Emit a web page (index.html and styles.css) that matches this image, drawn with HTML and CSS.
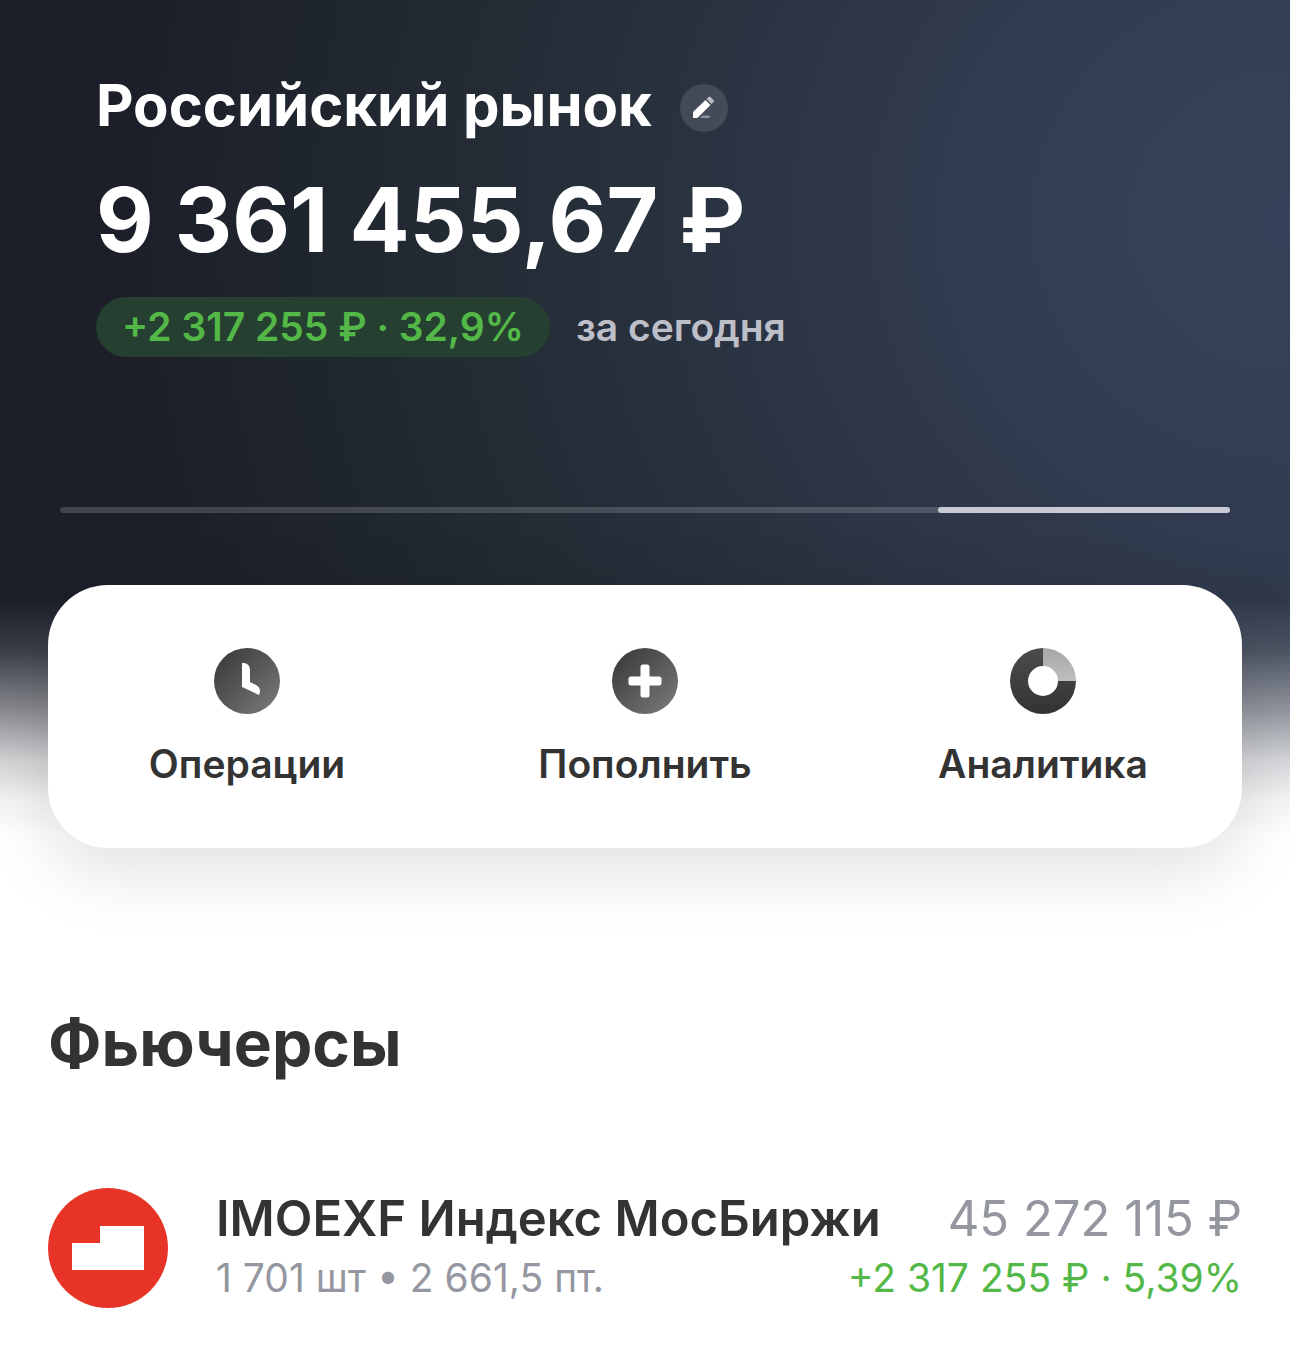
FILE: index.html
```html
<!DOCTYPE html>
<html lang="ru">
  <head>
    <meta charset="UTF-8" />
    <meta name="viewport" content="width=device-width, initial-scale=1.0" />
    <title>Российский рынок</title>
    <link rel="stylesheet" href="styles.css">
  </head>
  <body>
    <header class="hero">
      <div class="account">
        <div class="account-title">
          <h1>Российский рынок</h1>
          <button class="edit-btn" aria-label="Изменить название">
            <svg viewBox="0 0 48 48" aria-hidden="true">
              <path d="M13 34v-5q0-1 1-2L25.500 16l5 5L18.500 33q-1 1-2 1z" fill="#fff" />
              <path d="M26.500 15l2-2q1-1 2 0l3 3q1 1 0 2l-2 2z" fill="#bbbcc6" />
              <path d="M20 34l2.500-2.500h6q1.500 0 1.500 1.200t-1.500 1.300z" fill="#8e9097" />
            </svg>
          </button>
        </div>
        <p class="balance">9 361 455,67 ₽</p>
        <div class="change">
          <span class="change-badge">+2 317 255 ₽ · 32,9%</span>
          <span class="change-period">за сегодня</span>
        </div>
      </div>

      <div class="pager"><span class="pager-active"></span></div>

      <nav class="actions">
        <button class="action">
          <svg viewBox="0 0 66 66" aria-hidden="true">
            <defs>
              <linearGradient id="iconShade" x1="0.1" y1="0.1" x2="0.9" y2="0.9">
                <stop offset="0" stop-color="#3c3c3c" />
                <stop offset="1" stop-color="#757575" />
              </linearGradient>
            </defs>
            <circle cx="33" cy="33" r="33" fill="url(#iconShade)" />
            <path d="M28 15h2q6 1 6 7v12l6 3q4 2 4 6 0 2-1 4L28 39z" fill="#fff" />
          </svg>
          Операции
        </button>
        <button class="action">
          <svg viewBox="0 0 66 66" aria-hidden="true">
            <circle cx="33" cy="33" r="33" fill="url(#iconShade)" />
            <path d="M28.500 19q0-2.500 2.500-2.500h4q2.500 0 2.500 2.500v9.500H47q2.500 0 2.500 2.500v4q0 2.500-2.500 2.500h-9.500V47q0 2.500-2.500 2.500h-4q-2.500 0-2.500-2.500v-9.500H19q-2.500 0-2.500-2.500v-4q0-2.500 2.500-2.500h9.500z" fill="#fff" />
          </svg>
          Пополнить
        </button>
        <button class="action">
          <svg viewBox="0 0 66 66" aria-hidden="true">
            <defs>
              <linearGradient id="ringShade" x1="0" y1="0" x2="0" y2="1">
                <stop offset="0" stop-color="#4c4c4c" />
                <stop offset="1" stop-color="#333" />
              </linearGradient>
              <linearGradient id="sliceShade" x1="0" y1="0" x2="0" y2="1">
                <stop offset="0" stop-color="#a6a6a6" />
                <stop offset="1" stop-color="#bfbfbf" />
              </linearGradient>
            </defs>
            <path d="M33 0A33 33 0 1 0 66 33H48A15 15 0 1 1 33 18z" fill="url(#ringShade)" />
            <path d="M33 0A33 33 0 0 1 66 33H48A15 15 0 0 0 33 18z" fill="url(#sliceShade)" />
          </svg>
          Аналитика
        </button>
      </nav>
    </header>

    <main class="holdings">
      <h2>Фьючерсы</h2>
      <a class="holding" href="#imoexf">
        <svg class="holding-logo" viewBox="0 0 120 120" aria-hidden="true">
          <circle cx="60" cy="60" r="60" fill="#e83427" />
          <path d="M24 55h28V38h44v44H24z" fill="#fff" />
        </svg>
        <span class="holding-info">
          <span class="holding-row">
            <span class="holding-name">IMOEXF Индекс МосБиржи</span>
            <span class="holding-sum">45 272 115 ₽</span>
          </span>
          <span class="holding-row small">
            <span class="holding-note">1 701 шт • 2 661,5 пт.</span>
            <span class="holding-gain">+2 317 255 ₽ · 5,39%</span>
          </span>
        </span>
      </a>
    </main>
  </body>
</html>
```
FILE: styles.css
```css
* {
  margin: 0;
  padding: 0;
  box-sizing: border-box;
}

body {
  background: #fff;
  color: #333;
  font-family: Inter, "Liberation Sans", sans-serif;
}

button {
  border: none;
  background: none;
  color: inherit;
  font-family: inherit;
  cursor: pointer;
}

svg {
  display: block;
}

.hero {
  padding: 72px 48px 0;
  background:
    linear-gradient(to bottom, rgba(255, 255, 255, 0) 600px, rgba(255, 255, 255, 0.14) 650px, rgba(255, 255, 255, 0.48) 710px, rgba(255, 255, 255, 0.8) 760px, rgba(255, 255, 255, 0.95) 800px, #fff 836px),
    radial-gradient(1240px 1160px at 100% 220px, #37425a 0%, #343e54 18%, #2f384a 36%, #28303c 54%, #20272f 76%, #1c1f2a 94%);
}

.account {
  padding: 0 48px;
  color: #fff;
}

.account-title {
  display: flex;
  align-items: center;
  gap: 28px;
}

h1 {
  padding-bottom: 6px;
  font-size: 58px;
  line-height: 66px;
  font-weight: 700;
}

.edit-btn {
  width: 48px;
  height: 48px;
  border-radius: 50%;
  background: rgba(255, 255, 255, 0.12);
}

.balance {
  margin-top: 24px;
  font-size: 89px;
  line-height: 104px;
  font-weight: 700;
}

.change {
  display: flex;
  align-items: center;
  gap: 26px;
  margin-top: 25px;
  font-size: 39px;
  line-height: 60px;
  font-weight: 600;
}

.change-badge {
  padding: 0 26px;
  border-radius: 30px;
  background: #253f31;
  color: #54b848;
}

.change-period {
  color: #bcbfc8;
}

.pager {
  height: 6px;
  margin: 150px 12px 72px;
  border-radius: 3px;
  background: rgba(255, 255, 255, 0.16);
}

.pager-active {
  display: block;
  width: 25%;
  height: 6px;
  margin-left: auto;
  border-radius: 3px;
  background: #c8cbd5;
}

.actions {
  display: flex;
  border-radius: 60px;
  background: #fff;
  box-shadow: 0 20px 72px rgba(0, 0, 0, 0.13);
}

.action {
  display: flex;
  flex: 1;
  flex-direction: column;
  align-items: center;
  gap: 26px;
  padding: 63px 0 60px;
  font-size: 39px;
  line-height: 48px;
  font-weight: 600;
}

.action svg {
  width: 66px;
  height: 66px;
}

.holdings {
  padding: 155px 48px 40px;
}

h2 {
  font-size: 64px;
  line-height: 80px;
  font-weight: 700;
}

.holding {
  display: flex;
  align-items: center;
  gap: 48px;
  margin-top: 105px;
  color: #333;
  text-decoration: none;
}

.holding-logo {
  flex: none;
  width: 120px;
  height: 120px;
}

.holding-info {
  flex: 1;
}

.holding-row {
  display: flex;
  justify-content: space-between;
  font-size: 49px;
  line-height: 60px;
  white-space: nowrap;
}

.holding-row.small {
  font-size: 39px;
  line-height: 58px;
}

.holding-name {
  font-weight: 600;
}

.holding-sum,
.holding-note {
  color: #9497a0;
}

.holding-gain {
  color: #54b848;
}
```
